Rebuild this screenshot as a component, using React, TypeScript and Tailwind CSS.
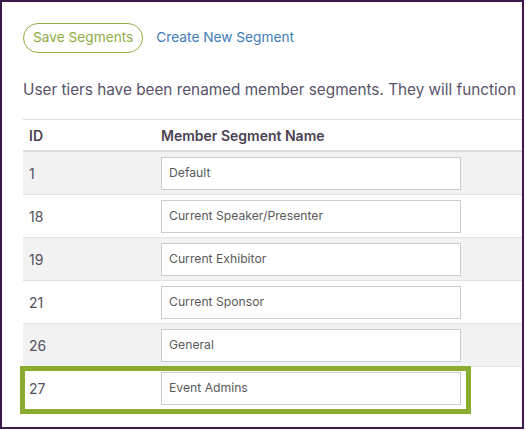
import React from 'react'

const segments = [
  { id: 1, name: 'Default' },
  { id: 18, name: 'Current Speaker/Presenter' },
  { id: 19, name: 'Current Exhibitor' },
  { id: 21, name: 'Current Sponsor' },
  { id: 26, name: 'General' },
  { id: 27, name: 'Event Admins', highlight: true },
]

export default function App() {
  return (
    <div
      className="w-[524px] h-[429px] border-2 border-[#3b1b4d] bg-white overflow-hidden"
      style={{ fontFamily: 'Inter, "Noto Sans", sans-serif' }}
    >
      <div className="pl-[21px] pt-[21px]">
        {/* actions */}
        <div className="flex items-center">
          <button className="h-[30px] px-[9px] rounded-full border border-[#8fae45] text-[#8fae45] text-[13.7px] leading-none">
            Save Segments
          </button>
          <a className="ml-[13px] text-[#3e7cb8] text-[13.7px] leading-none">Create New Segment</a>
        </div>

        <p className="mt-[25px] text-[15.3px] leading-[24px] text-[#58536a] whitespace-nowrap">
          User tiers have been renamed member segments. They will function
        </p>

        {/* table */}
        <div className="mt-[17px] border-t border-[#dedede]">
          <div className="flex h-[32px] items-center border-b-2 border-[#dcdcdc] text-[14px] font-semibold text-[#4a3f52]">
            <div className="w-[138px] pl-[6px]">ID</div>
            <div>Member Segment Name</div>
          </div>
          {segments.map((s, i) => (
            <div
              key={s.id}
              className={`relative flex h-[43px] items-center border-b border-[#e2e2e2] ${i % 2 === 0 ? 'bg-[#f2f2f2]' : 'bg-white'} ${s.highlight ? 'border-b-0' : ''}`}
            >
              <div className="w-[138px] pl-[6px] text-[14px] text-[#55505e]">{s.id}</div>
              <div className="w-[300px] h-[33px] border border-[#cccccc] bg-white flex items-center px-[7px] text-[12.2px] text-[#5a5a5a]">
                {s.name}
              </div>
              {s.highlight && (
                <div className="absolute left-[-3px] top-[-1px] w-[451px] h-[48px] border-[5px] border-[#8aac2f]" />
              )}
            </div>
          ))}
        </div>
      </div>
    </div>
  )
}
